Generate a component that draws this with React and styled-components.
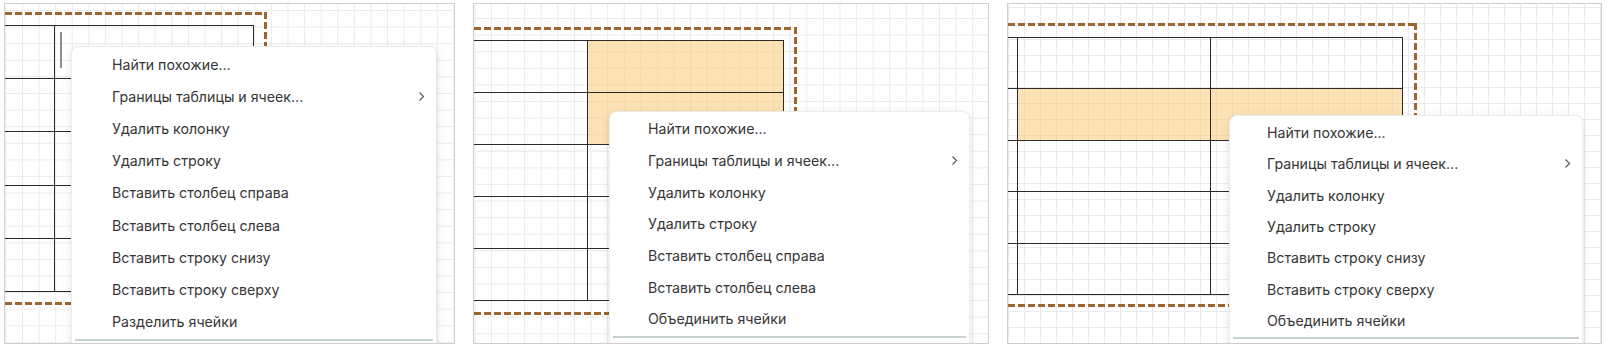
import React from 'react';
import styled, { createGlobalStyle } from 'styled-components';

const GlobalStyle = createGlobalStyle`
  html, body {
    margin: 0;
    padding: 0;
    background: #ffffff;
  }
  body {
    font-family: Inter, "Noto Sans", "Liberation Sans", sans-serif;
  }
`;

const Strip = styled.div`
  display: flex;
  align-items: flex-start;
  gap: 18px;
  padding: 3px 0 0 4px;
`;

const Panel = styled.div`
  position: relative;
  width: ${(p) => p.$w}px;
  height: 341px;
  box-sizing: border-box;
  border: 1px solid #cfcfcf;
  overflow: hidden;
  background-color: #ffffff;
  background-image: linear-gradient(to right, #ebebeb 1px, transparent 1px),
    linear-gradient(to bottom, #ebebeb 1px, transparent 1px);
  background-size: ${(p) => p.$g}px ${(p) => p.$g}px;
  background-position: ${(p) => p.$gx}px ${(p) => p.$gy}px;
`;

/* table node on the canvas */
const Table = styled.div`
  position: absolute;
  left: ${(p) => p.$left}px;
  top: ${(p) => p.$top}px;
  display: grid;
  grid-template-columns: ${(p) => p.$cols.map((c) => c + 'px').join(' ')};
  grid-auto-rows: ${(p) => p.$rowH}px;
  border-top: 1px solid #2a2a2a;
  border-left: 1px solid #2a2a2a;
`;

const Cell = styled.div`
  box-sizing: border-box;
  border-right: 1px solid #2a2a2a;
  border-bottom: 1px solid #2a2a2a;
  background: ${(p) => (p.$on ? 'rgba(252, 198, 108, 0.5)' : 'transparent')};
`;

const dash = '#9d6530';

const Selection = styled.div`
  position: absolute;
  left: -220px;
  top: ${(p) => p.$top}px;
  width: ${(p) => p.$right + 220}px;
  height: ${(p) => p.$bottom - p.$top}px;
  background:
    linear-gradient(90deg, ${dash} 70%, transparent 0) left top / 10px 3px repeat-x,
    linear-gradient(90deg, ${dash} 70%, transparent 0) left bottom / 10px 3px repeat-x,
    linear-gradient(180deg, ${dash} 70%, transparent 0) right top / 3px 10px repeat-y;
  pointer-events: none;
`;

const Caret = styled.div`
  position: absolute;
  left: ${(p) => p.$x}px;
  top: ${(p) => p.$y}px;
  width: 2px;
  height: 36px;
  background: #8c8c8c;
`;

const Menu = styled.div`
  position: absolute;
  left: ${(p) => p.$x}px;
  top: ${(p) => p.$y}px;
  width: ${(p) => p.$w}px;
  height: 400px;
  box-sizing: border-box;
  padding-top: 1px;
  background: #ffffff;
  border: 1px solid #ececec;
  border-radius: 8px;
  box-shadow: 0 2px 10px rgba(0, 0, 0, 0.1);
  display: flex;
  flex-direction: column;
`;

const Item = styled.div`
  display: flex;
  align-items: center;
  justify-content: space-between;
  height: ${(p) => p.$h}px;
  padding: 0 11px 0 ${(p) => p.$pad}px;
  font-size: 14.2px;
  color: #363636;
  white-space: nowrap;
`;

const Separator = styled.div`
  margin: 1px 3px 0;
  height: 2px;
  background: #c8d1d1;
`;

const Chevron = () => (
  <svg width="7" height="11" viewBox="0 0 7 11">
    <polyline points="1.5,1.5 5.5,5.5 1.5,9.5" fill="none" stroke="#5a5a5a" strokeWidth="1.2" />
  </svg>
);

const head = ['Найти похожие...', 'Границы таблицы и ячеек...', 'Удалить колонку', 'Удалить строку'];

const panels = [
  {
    w: 451, g: 16.6, gx: 0.4, gy: 6,
    table: { left: -150, top: 21, cols: [199, 199], rowH: 53.2, rows: 5, hl: [] },
    sel: { top: 8, right: 262, bottom: 301 },
    caret: { x: 55, y: 28 },
    menu: { x: 66, y: 42, w: 366, pad: 40, h: 32.2 },
    items: [...head, 'Вставить столбец справа', 'Вставить столбец слева', 'Вставить строку снизу', 'Вставить строку сверху', 'Разделить ячейки'],
  },
  {
    w: 516, g: 16.6, gx: 0.4, gy: 14,
    table: { left: -83, top: 36, cols: [196, 196], rowH: 52, rows: 5, hl: ['0-1', '1-1'] },
    sel: { top: 23, right: 323, bottom: 311 },
    menu: { x: 135, y: 107, w: 361, pad: 38, h: 31.7 },
    items: [...head, 'Вставить столбец справа', 'Вставить столбец слева', 'Объединить ячейки'],
  },
  {
    w: 595, g: 16, gx: 0, gy: 3,
    table: { left: -184, top: 33, cols: [193, 193, 192], rowH: 51.4, rows: 5, hl: ['1-1', '1-2'] },
    sel: { top: 19, right: 409, bottom: 303 },
    menu: { x: 221, y: 111, w: 354, pad: 37, h: 31.3 },
    items: [...head, 'Вставить строку снизу', 'Вставить строку сверху', 'Объединить ячейки'],
  },
];

const Shot = ({ p }) => {
  const { table, sel, caret, menu } = p;
  const cells = [];
  for (let r = 0; r < table.rows; r++) {
    table.cols.forEach((_, c) => {
      cells.push(<Cell key={r + '-' + c} $on={table.hl.includes(r + '-' + c)} />);
    });
  }
  return (
    <Panel $w={p.w} $g={p.g} $gx={p.gx} $gy={p.gy}>
      <Table $left={table.left} $top={table.top} $cols={table.cols} $rowH={table.rowH}>
        {cells}
      </Table>
      <Selection $top={sel.top} $right={sel.right} $bottom={sel.bottom} />
      {caret && <Caret $x={caret.x} $y={caret.y} />}
      <Menu $x={menu.x} $y={menu.y} $w={menu.w}>
        {p.items.map((t, i) => (
          <Item key={t} $h={menu.h} $pad={menu.pad}>
            <span>{t}</span>
            {i === 1 && <Chevron />}
          </Item>
        ))}
        <Separator />
      </Menu>
    </Panel>
  );
};

export default function App() {
  return (
    <>
      <GlobalStyle />
      <Strip>
        {panels.map((p, i) => (
          <Shot key={i} p={p} />
        ))}
      </Strip>
    </>
  );
}
